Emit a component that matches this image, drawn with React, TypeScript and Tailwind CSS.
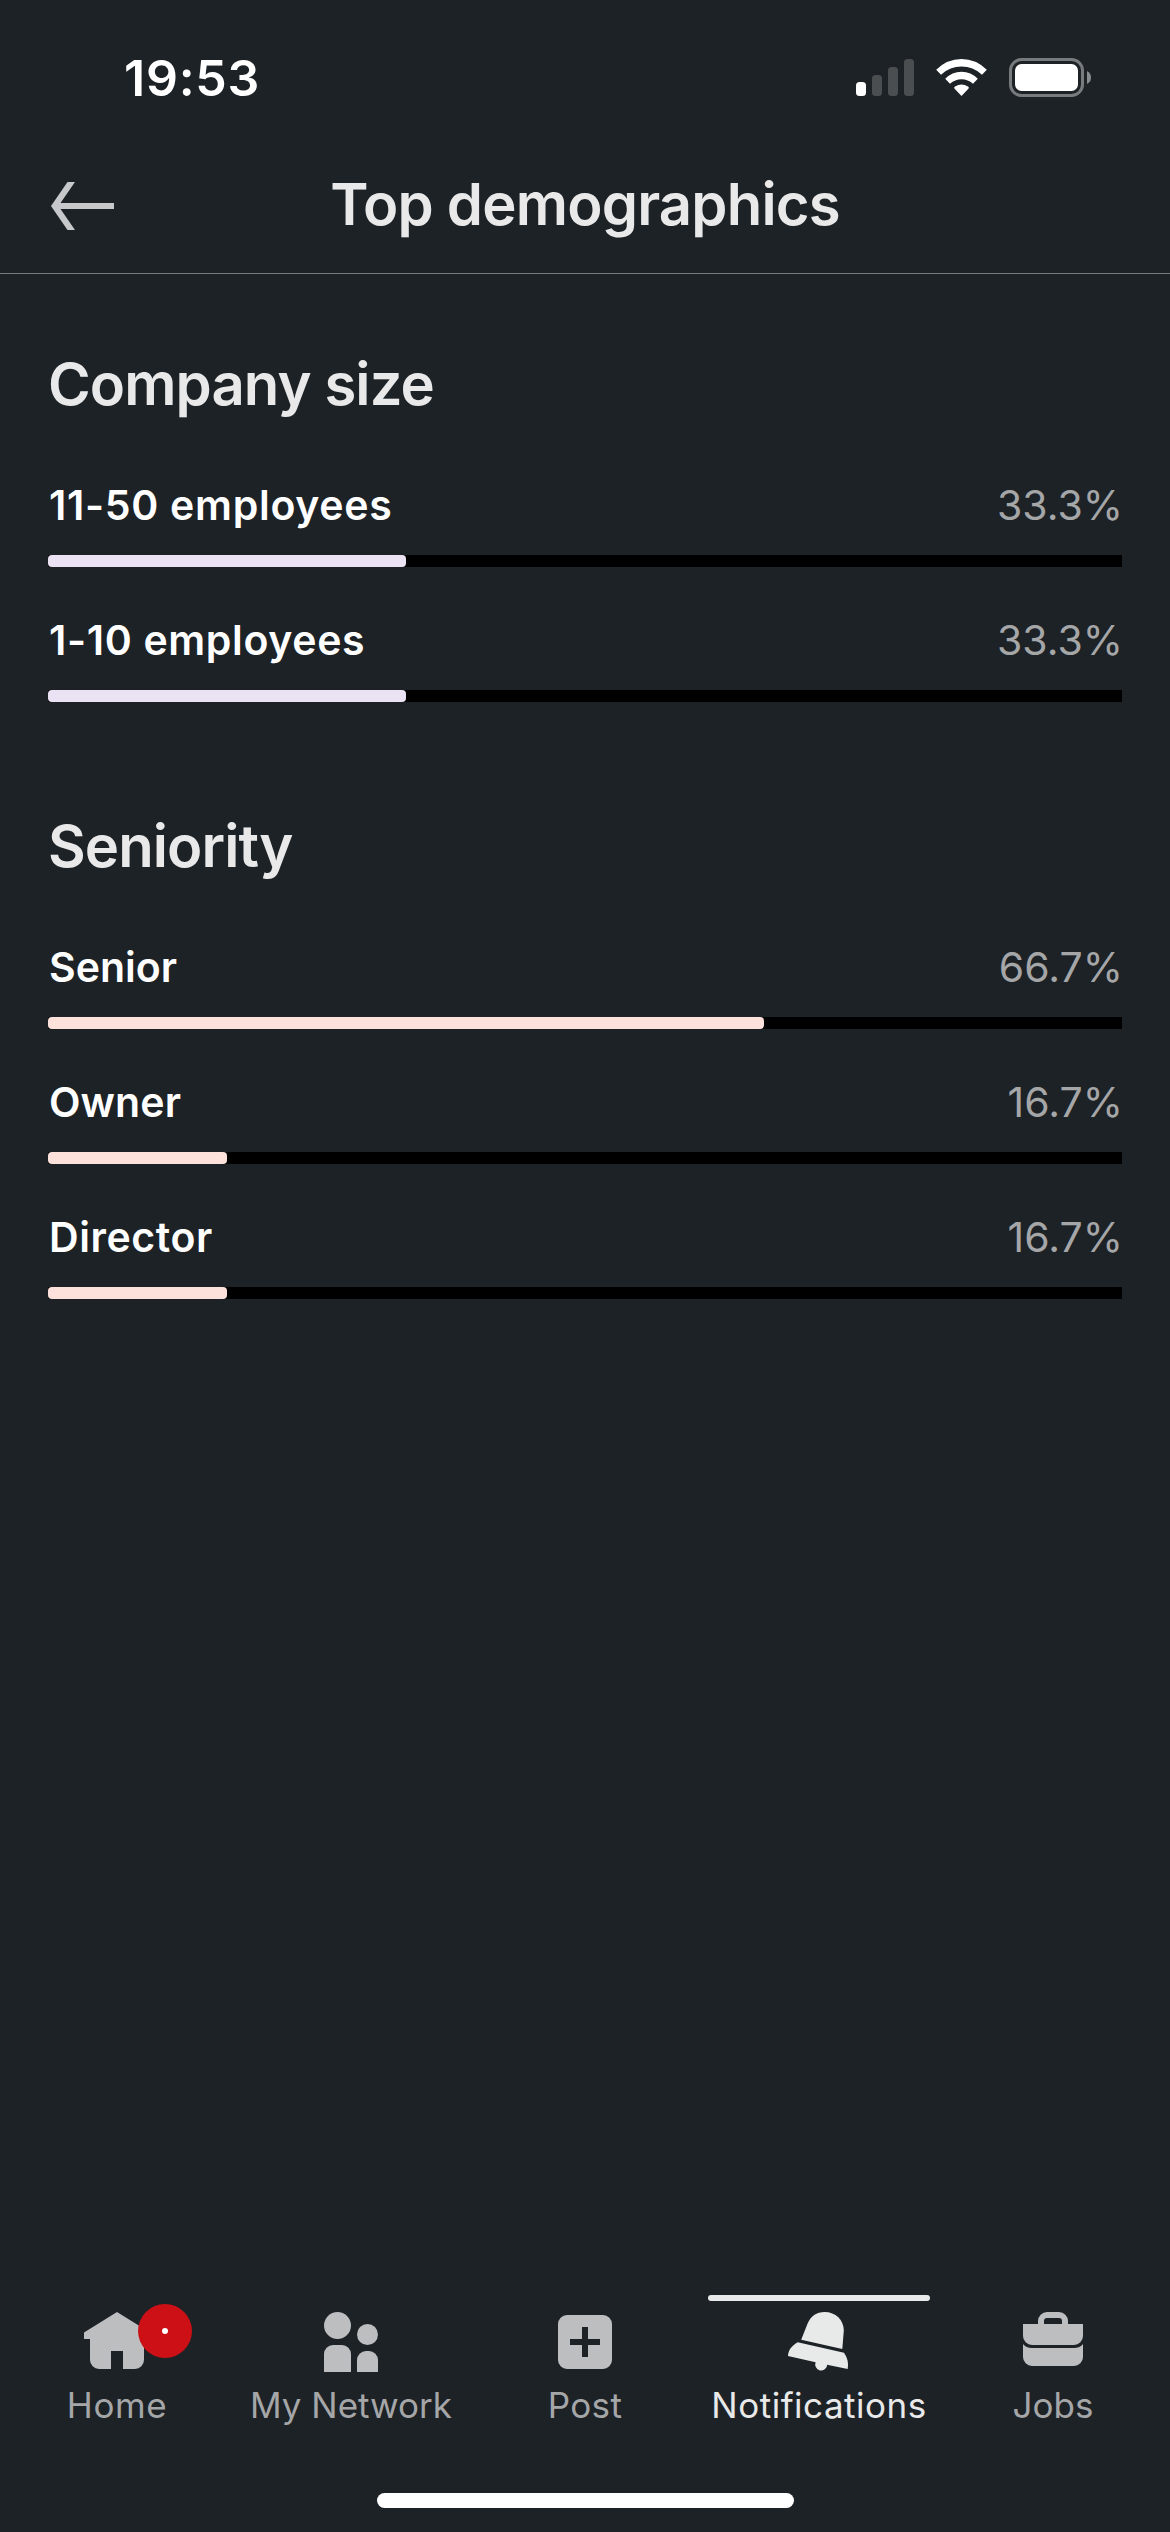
import type { ReactNode } from "react";

type Item = { label: string; value: string; percent: number; tracking: string };

const companySize: Item[] = [
  { label: "11-50 employees", value: "33.3%", percent: 33.33, tracking: "tracking-[0.7px]" },
  { label: "1-10 employees", value: "33.3%", percent: 33.33, tracking: "tracking-[0.65px]" },
];

const seniority: Item[] = [
  { label: "Senior", value: "66.7%", percent: 66.67, tracking: "tracking-normal" },
  { label: "Owner", value: "16.7%", percent: 16.67, tracking: "tracking-[0.1px]" },
  { label: "Director", value: "16.7%", percent: 16.67, tracking: "tracking-[0.6px]" },
];

function StatusBar() {
  return (
    <div className="flex h-[141px] items-start justify-between pt-12 pr-[79px] pl-[124px]">
      <span className="text-[50px] leading-[60px] font-semibold tracking-[0.75px] text-white">19:53</span>
      <svg className="mt-[10px] h-[39px] w-[236px]" viewBox="855 58 236 39" fill="none">
        <rect x="856" y="82" width="10" height="14" rx="3.5" fill="#fff" />
        <rect x="872" y="75" width="10" height="21" rx="3.5" fill="#4a4e51" />
        <rect x="888" y="67" width="10" height="29" rx="3.5" fill="#4a4e51" />
        <rect x="904" y="59" width="10" height="37" rx="3.5" fill="#4a4e51" />
        <path d="M961.5 96 L954.4 88.6 Q953.6 87.5 955 86.6 Q961.5 82.2 968 86.6 Q969.4 87.5 968.6 88.6 Z" fill="#fff" />
        <path d="M945.2 78.8 Q952 71.9 961.5 71.8 Q971 71.9 977.8 78.8 L973 83.8 Q968 79.3 961.5 79.2 Q955 79.3 950 83.8 Z" fill="#fff" />
        <path d="M936.2 69.8 Q947 59 961.5 59 Q976 59 986.8 69.8 L982 74.7 Q973 66.6 961.5 66.6 Q950 66.6 941 74.7 Z" fill="#fff" />
        <rect x="1010.5" y="59.5" width="72" height="36" rx="11" stroke="#787b7e" strokeWidth="3" />
        <rect x="1015" y="64" width="63" height="27" rx="6.5" fill="#fff" />
        <path d="M1087 71 Q1091 73 1091 77.5 Q1091 82 1087 84 Z" fill="#8a8d8f" />
      </svg>
    </div>
  );
}

function Header() {
  return (
    <header className="grid h-[133px] grid-cols-[63px_1fr_63px] items-start border-b border-[#777b7e] px-[51px]">
      <svg className="mt-[41px] h-12 w-[63px]" viewBox="0 0 63 48" fill="#c6c8c9">
        <path d="M0 24 L16.5 0 H24 L9.5 21 H63 v6 H9.5 L24 48 H16.5 Z" />
      </svg>
      <h1 className="mt-7 text-center text-[58px] leading-[70px] font-semibold tracking-[-0.8px]">Top demographics</h1>
    </header>
  );
}

function Bar({ item, fill }: { item: Item; fill: string }) {
  return (
    <div className="h-[135px]">
      <div className="flex items-baseline justify-between text-[41px] leading-[50px]">
        <span className={`pl-px font-semibold text-white ${item.tracking}`}>{item.label}</span>
        <span className="-mr-px text-[#a5a6a8]">{item.value}</span>
      </div>
      <div className="mt-[25px] h-3 bg-black">
        <div className={`h-full rounded-[4px] ${fill}`} style={{ width: `${item.percent}%` }} />
      </div>
    </div>
  );
}

function Section({ title, items, fill }: { title: string; items: Item[]; fill: string }) {
  return (
    <section>
      <h2 className="text-[58px] leading-[70px] font-semibold tracking-[-0.9px]">{title}</h2>
      <div className="mt-[61px]">
        {items.map((i) => (
          <Bar key={i.label} item={i} fill={fill} />
        ))}
      </div>
    </section>
  );
}

function Tab({ label, tracking, active, badge, children }: { label: string; tracking: string; active?: boolean; badge?: boolean; children: ReactNode }) {
  return (
    <div className={`relative flex flex-col items-center pt-[11px] ${active ? "text-[#e8eae9]" : "text-[#bcbec0]"}`}>
      {active && <div className="absolute top-0 left-1/2 h-1.5 w-[222px] -translate-x-1/2 rounded-[3px] bg-[#e8e9e9]" />}
      <svg className="size-[72px]" viewBox="0 0 72 72" fill="currentColor">{children}</svg>
      {badge && (
        <div className="absolute top-[9px] left-[138px] flex size-[54px] items-center justify-center rounded-full bg-[#cc1016]">
          <div className="size-1.5 rounded-full bg-white" />
        </div>
      )}
      <span className={`mt-1.5 text-[35px] leading-[42px] ${tracking} ${active ? "text-[#e9e9e9]" : "text-[#a5a6a8]"}`}>{label}</span>
    </div>
  );
}

function TabBar() {
  return (
    <nav className="grid h-[198px] grid-cols-5">
      <Tab label="Home" tracking="tracking-[0.6px]" badge>
        <path d="M36 6 L3 26.5 V33 H9 V54 a9 9 0 0 0 9 9 H30 V45 H42 V63 H54 a9 9 0 0 0 9-9 V33 H69 V26.5 Z" />
      </Tab>
      <Tab label="My Network" tracking="tracking-normal">
        <circle cx="22.5" cy="19.5" r="13.5" />
        <circle cx="52.5" cy="28.5" r="10.5" />
        <path d="M9 66 V48 a9 9 0 0 1 9-9 H27 a9 9 0 0 1 9 9 V66 Z" />
        <path d="M42 66 V54 a9 9 0 0 1 9-9 H54 a9 9 0 0 1 9 9 V66 Z" />
      </Tab>
      <Tab label="Post" tracking="tracking-[0.4px]">
        <path fillRule="evenodd" d="M18 9 H54 a9 9 0 0 1 9 9 V54 a9 9 0 0 1-9 9 H18 a9 9 0 0 1-9-9 V18 a9 9 0 0 1 9-9 Z M33 21 V33 H21 V39 H33 V51 H39 V39 H51 V33 H39 V21 Z" />
      </Tab>
      <Tab label="Notifications" tracking="tracking-[0.5px]" active>
        <path d="M18.2 33.7 L24.5 17.8 C27.5 10.3 33.5 6 41.7 6 C52.5 6 60.8 14 60.8 24.5 L59.3 43 Z" />
        <path d="M14.7 36.3 L61 46.7 C64.5 51.5 65.8 57 64.7 63 L44 58.8 L44 60 A6 6 0 1 1 32.6 56.3 L5 50 C5.3 44 9 39.5 14.7 36.3 Z" />
      </Tab>
      <Tab label="Jobs" tracking="tracking-normal">
        <path fillRule="evenodd" d="M6 18 H21 V15 a9 9 0 0 1 9-9 H42 a9 9 0 0 1 9 9 V18 H66 V30 a9 9 0 0 1-9 9 H15 a9 9 0 0 1-9-9 Z M27 18 H45 V15 a3 3 0 0 0-3-3 H30 a3 3 0 0 0-3 3 Z" />
        <path d="M6 38 C8 40.5 11 42 15 42 H57 C61 42 64 40.5 66 38 V51 a9 9 0 0 1-9 9 H15 a9 9 0 0 1-9-9 Z" />
      </Tab>
    </nav>
  );
}

export default function App() {
  return (
    <div className="flex h-[2532px] w-[1170px] flex-col bg-[#1d2226] font-['Inter',sans-serif] text-[#e9e9e9]">
      <StatusBar />
      <Header />
      <main className="flex flex-1 flex-col gap-[61px] px-12 pt-[75px]">
        <Section title="Company size" items={companySize} fill="bg-[#ebe3f3]" />
        <Section title="Seniority" items={seniority} fill="bg-[#fde2db]" />
      </main>
      <TabBar />
      <div className="mb-6 h-[15px] w-[417px] self-center rounded-full bg-white" />
    </div>
  );
}
